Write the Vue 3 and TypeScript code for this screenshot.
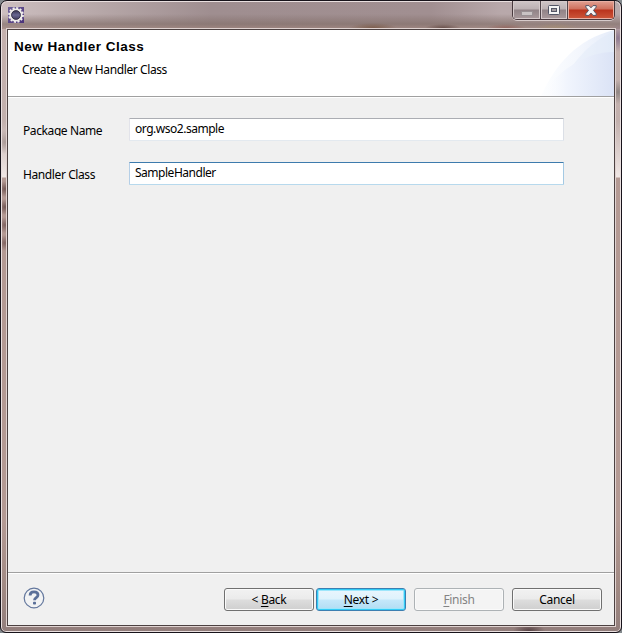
<script setup lang="ts">
import { ref } from 'vue'

interface Field {
  id: string
  label: string
  value: string
  focused: boolean
}
interface Action {
  before: string
  key: string
  after: string
  kind: string
}

const fields = ref<Field[]>([
  { id: 'package', label: 'Package Name', value: 'org.wso2.sample', focused: false },
  { id: 'handler', label: 'Handler Class', value: 'SampleHandler', focused: true },
])

const actions: Action[] = [
  { before: '< ', key: 'B', after: 'ack', kind: 'back' },
  { before: '', key: 'N', after: 'ext >', kind: 'next' },
  { before: '', key: 'F', after: 'inish', kind: 'finish' },
  { before: 'Cancel', key: '', after: '', kind: 'cancel' },
]
</script>

<template>
  <div class="desktop">
    <div class="window">
      <header class="titlebar">
        <svg class="app-icon" width="16" height="16" viewBox="0 0 16 16">
          <defs>
            <linearGradient id="gi" x1="0" y1="0" x2="1" y2="1">
              <stop offset="0" stop-color="#70639a" />
              <stop offset="1" stop-color="#4b3279" />
            </linearGradient>
            <linearGradient id="gc" x1="0" y1="0" x2="0" y2="1">
              <stop offset="0" stop-color="#2c2941" />
              <stop offset=".5" stop-color="#686792" />
              <stop offset="1" stop-color="#37324f" />
            </linearGradient>
          </defs>
          <rect width="16" height="16" fill="url(#gi)" />
          <circle cx="8" cy="8" r="7" fill="none" stroke="#f2f0ee" stroke-width="1.8" stroke-dasharray="2.1 1.565" />
          <circle cx="8" cy="8" r="5.6" fill="url(#gc)" stroke="#eeecea" stroke-width="2" />
          <circle cx="8" cy="8" r="4.4" fill="none" stroke="#29263b" stroke-width=".8" />
        </svg>
        <div class="controls">
          <span class="ctl min">
            <svg width="12" height="5"><rect x=".5" y=".5" width="11" height="4" fill="#c9c3c4" stroke="#989093" /></svg>
          </span>
          <span class="ctl max">
            <svg width="12" height="10">
              <rect x=".5" y=".5" width="11" height="9" rx="1" fill="#f4f4f4" stroke="#535666" />
              <rect x="3.5" y="3.5" width="5" height="3" fill="#a59da1" stroke="#535666" />
            </svg>
          </span>
          <span class="ctl close">
            <svg width="12" height="11" viewBox="0 0 12 11">
              <path d="M.8.6H4L6 2.8 8 .6h3.2v1.5L8.5 5.4l2.7 3.3v1.7H8L6 8.1l-2 2.3H.8V8.7l2.7-3.3L.8 2.1z" fill="#f6f6f6" stroke="#555465" stroke-width="1" />
            </svg>
          </span>
        </div>
      </header>

      <main class="client">
        <section class="banner">
          <div class="banner-text">
            <h1><span>New Handler Class</span></h1>
            <p>Create a New Handler Class</p>
          </div>
          <svg class="art" width="76" height="66" viewBox="0 0 76 66">
            <defs>
              <linearGradient id="a1"><stop offset="0" stop-color="#fdfeff" /><stop offset=".5" stop-color="#f4f7fd" /><stop offset="1" stop-color="#e5ecf9" /></linearGradient>
              <linearGradient id="a2"><stop offset="0" stop-color="#fff" stop-opacity="0" /><stop offset=".35" stop-color="#f1f5fd" /><stop offset="1" stop-color="#dbe3f6" /></linearGradient>
            </defs>
            <path d="M3 66C17 35 39 9 76 0v66z" fill="url(#a1)" />
            <path d="M35 35C47 19 61 7 76 2v64H35z" fill="#dfe8f8" opacity=".4" />
            <path d="M3 66C20 41 46 22 76 22v44z" fill="url(#a2)" />
          </svg>
        </section>

        <form class="form">
          <div v-for="f in fields" :key="f.id" class="row">
            <label :for="f.id" :class="f.id">{{ f.label }}</label>
            <div class="box" :class="[f.id, { focused: f.focused }]"><span>{{ f.value }}</span></div>
          </div>
        </form>

        <footer class="footer">
          <svg class="help" width="22" height="22" viewBox="0 0 22 22">
            <circle cx="11" cy="11" r="9.8" fill="#f2f3f4" stroke="#63779d" stroke-width="1.2" />
            <path d="M7.1 8.5C7.1 5.9 8.7 4.9 11 4.9s4 1.2 4 3.1c0 2.6-3.5 2.6-3.5 5.3" fill="none" stroke="#5b7099" stroke-width="2.8" />
            <rect x="10" y="14.8" width="3" height="2.8" rx=".8" fill="#5b7099" />
          </svg>
          <div class="buttons">
            <button v-for="a in actions" :key="a.kind" type="button" class="btn" :class="a.kind" :disabled="a.kind === 'finish'">
              <span>{{ a.before }}<u v-if="a.key">{{ a.key }}</u>{{ a.after }}</span>
            </button>
          </div>
        </footer>
      </main>
    </div>
  </div>
</template>

<style>
body {
  margin: 0;
  overflow: hidden;
}
</style>

<style scoped>
* {
  box-sizing: border-box;
}
.desktop {
  width: 622px;
  height: 633px;
  background: #83898d;
  font: 12px/16px "Noto Sans", "Open Sans", sans-serif;
  color: #000;
}
.window {
  width: 622px;
  height: 633px;
  padding: 1px 5px 5px;
  border: 1px solid #17131a;
  border-radius: 7px 7px 6px 6px;
  box-shadow: inset 0 0 0 1px #e9dfdf;
  background:
    radial-gradient(ellipse 24px 5px at 372px 27px, #755440cc, #75544000),
    radial-gradient(ellipse 18px 4px at 442px 27px, #563d38bb, #563d3800),
    radial-gradient(ellipse 20px 4px at 505px 27px, #8a514999, #8a514900),
    radial-gradient(ellipse 22px 5px at 555px 27px, #a58e70aa, #a58e7000),
    radial-gradient(ellipse 8px 8px at 4px 188px, #755a57, #755a5700),
    radial-gradient(ellipse 8px 8px at 4px 206px, #755a57, #755a5700),
    radial-gradient(ellipse 8px 8px at 4px 224px, #806461, #80646100),
    radial-gradient(ellipse 8px 8px at 4px 242px, #806461, #80646100),
    radial-gradient(ellipse 9px 12px at 4px 141px, #aa9a97, #aa9a9700),
    radial-gradient(ellipse 9px 14px at 617px 37px, #8d7991, #8d799100),
    radial-gradient(ellipse 9px 12px at 617px 91px, #8f8583, #8f858300),
    radial-gradient(ellipse 16px 8px at 528px 630px, #574345, #57434500),
    linear-gradient(to bottom, transparent 28px, #c5b1ae 28px, #c2b0ad 120px, #f0e7e5 176px, #b49a94 177px, #b49a94 520px, #a08983 590px, #927e7c 100%),
    linear-gradient(to bottom, #85716c00 13px, #85716cbb 23px, #a0867fcc 28px) no-repeat 0 0 / 100% 28px,
    linear-gradient(to right, #cdbfc0, #b6a7a8 100px, #9f8e90 210px, #a18f91 430px, #b8a8aa 500px, #b9aaac);
  display: flex;
  flex-direction: column;
}
.titlebar {
  height: 26px;
  flex: none;
  display: flex;
  justify-content: space-between;
  align-items: flex-start;
  padding-left: 2px;
}
.app-icon {
  margin-top: 5px;
}
.controls {
  display: flex;
  width: 103px;
  height: 19px;
  margin-top: -1px;
  margin-right: 1px;
  border: 1px solid #48393e;
  border-top: 0;
  border-radius: 0 0 5px 5px;
  overflow: hidden;
  box-shadow: 0 1px 0 #d7cbcb;
}
.ctl {
  height: 18px;
  display: flex;
  justify-content: center;
  align-items: center;
  border-right: 1px solid #51464b;
  box-shadow: inset 0 0 0 1px #d5cacb;
  background: linear-gradient(#cfc6c7 0, #bcb1b3 8px, #918387 9px, #a99a9c 100%);
}
.min {
  width: 28px;
  padding-top: 6px;
}
.max {
  width: 27px;
}
.close {
  width: 46px;
  border-right: 0;
  box-shadow: inset 0 0 0 1px #e9afa3;
  background: linear-gradient(#e2a193 0, #cf705d 8px, #ba331d 9px, #cd573b 100%);
}
.client {
  width: 610px;
  height: 599px;
  flex: none;
  border: 1px solid #e0d3d1;
  background: #f0f0f0;
  box-shadow: inset 0 0 0 1px #4c4141;
  padding: 1px;
  display: flex;
  flex-direction: column;
}
.banner {
  height: 68px;
  flex: none;
  display: flex;
  justify-content: space-between;
  background: linear-gradient(#fff 66px, #a0a0a0 66px, #a0a0a0 67px, #fff 67px);
}
.art {
  display: block;
}
.banner-text {
  padding: 8px 0 0 6px;
}
h1 {
  margin: 0;
  font: bold 13.5px/17px "Liberation Sans", Arial, sans-serif;
  letter-spacing: 0.52px;
  white-space: nowrap;
}
p {
  margin: 7px 0 0 8px;
  letter-spacing: -0.4px;
  white-space: nowrap;
}
.form {
  flex: 1;
  padding: 20px 0 0 15px;
}
.row {
  display: flex;
  height: 23px;
  margin-bottom: 21px;
}
label {
  width: 106px;
  padding-top: 5px;
  letter-spacing: -0.4px;
  white-space: nowrap;
}
label.package {
  height: 18px;
  overflow: hidden;
}
.box {
  width: 435px;
  height: 23px;
  padding: 2px 5px;
  background: #fff;
  border: 1px solid;
  border-color: #abadb3 #dbdfe6 #e3e9ef #e2e3ea;
  border-radius: 1px;
  letter-spacing: -0.48px;
}
.box.focused {
  border-color: #3d7bad #a4c9e3 #b7d9ed #b5cfe7;
}
.footer {
  height: 53px;
  flex: none;
  display: flex;
  justify-content: space-between;
  border-top: 1px solid #a0a0a0;
  box-shadow: inset 0 1px 0 #fff;
  padding: 15px 12px 0 15px;
}
.help {
  margin-top: -1px;
}
.buttons {
  display: flex;
}
.btn {
  width: 90px;
  height: 23px;
  padding: 0;
  border: 1px solid #707070;
  border-radius: 3px;
  font: inherit;
  letter-spacing: -0.3px;
  color: #000;
  background: linear-gradient(#f2f2f2 0, #ebebeb 48%, #dddddd 52%, #cfcfcf 100%);
  box-shadow: inset 0 0 0 1px #fafafa;
}
.btn + .btn {
  margin-left: 8px;
}
.btn + .btn.next {
  margin-left: 2px;
}
.btn.next {
  border-color: #3c7fb1;
  background: linear-gradient(#eaf6fd 0, #def2fc 48%, #c5e8fa 52%, #b0dcf3 100%);
  box-shadow: inset 0 0 0 1px #32cbf5, inset 0 0 0 2px #9ee6fb;
}
.btn.finish {
  border-color: #adb2b5;
  background: #f4f4f4;
  color: #838383;
}
u {
  text-underline-offset: 2px;
  text-decoration-thickness: 1px;
}
</style>
